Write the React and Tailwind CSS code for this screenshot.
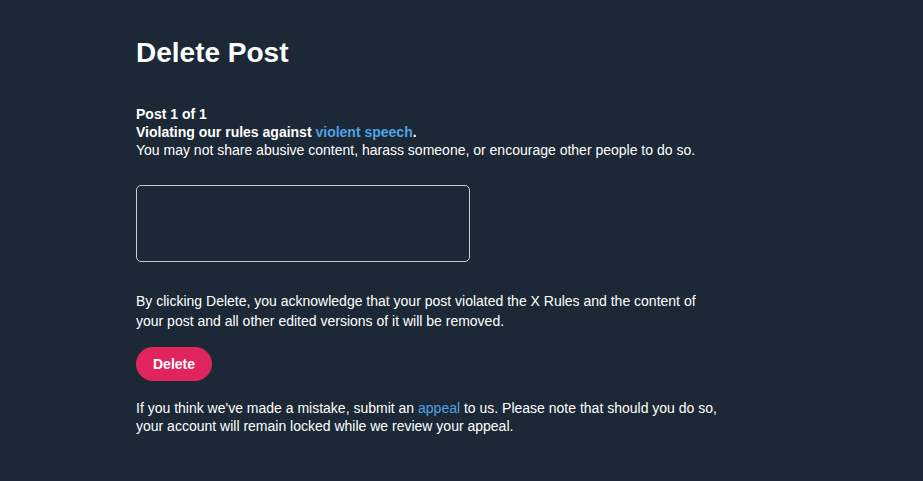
export default function App() {
  return (
    <div className="min-h-screen bg-[#1c2835] text-white font-['Liberation_Sans',Arial,sans-serif]">
      <div className="pl-[136px] pt-[36px] w-[725px]">
        <h1 className="text-[28px] font-bold leading-[34px]">Delete Post</h1>

        <div className="mt-[35px] text-[14px] leading-[18px]">
          <p className="font-bold">Post 1 of 1</p>
          <p className="font-bold">
            Violating our rules against{' '}
            <a href="#" className="text-[#4fa3e6]">violent speech</a>.
          </p>
          <p>You may not share abusive content, harass someone, or encourage other people to do so.</p>
        </div>

        <div className="mt-[26px] w-[334px] h-[77px] rounded-[5px] border border-[#c5ccd6]" />

        <p className="mt-[29px] text-[14px] leading-[20px]">
          By clicking Delete, you acknowledge that your post violated the X Rules and the content of your post and all other edited versions of it will be removed.
        </p>

        <button className="mt-[16px] h-[34px] w-[76px] rounded-full bg-[#e0245e] text-[14px] font-bold text-white">
          Delete
        </button>

        <p className="mt-[18px] text-[14px] leading-[18px]">
          If you think we've made a mistake, submit an{' '}
          <a href="#" className="text-[#4fa3e6]">appeal</a> to us. Please note that should you do so, your account will remain locked while we review your appeal.
        </p>
      </div>
    </div>
  );
}
